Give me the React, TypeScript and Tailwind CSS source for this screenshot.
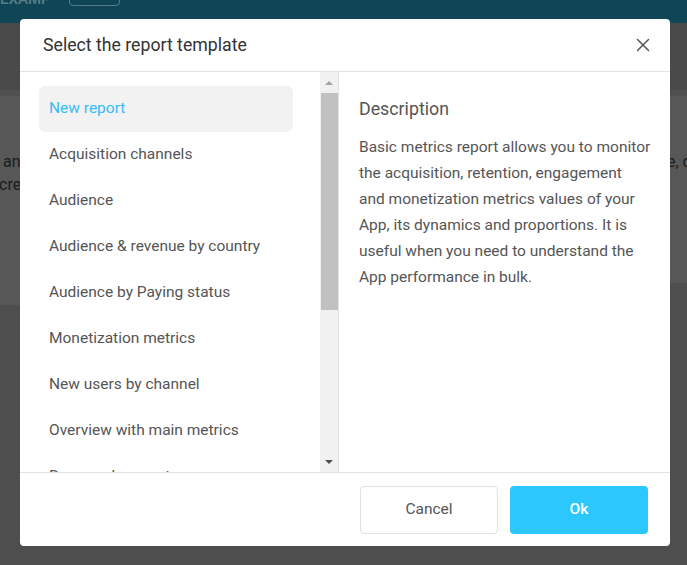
import { X } from 'lucide-react'

const templates = [
  'New report',
  'Acquisition channels',
  'Audience',
  'Audience & revenue by country',
  'Audience by Paying status',
  'Monetization metrics',
  'New users by channel',
  'Overview with main metrics',
  'Revenue by country',
]

const descLines = [
  'Basic metrics report allows you to monitor',
  'the acquisition, retention, engagement',
  'and monetization metrics values of your',
  'App, its dynamics and proportions. It is',
  'useful when you need to understand the',
  'App performance in bulk.',
]

export default function App() {
  return (
    <div className="relative h-[565px] w-[687px] overflow-hidden bg-[#4e4e4e] font-['Roboto',sans-serif]">
      {/* dimmed page behind the dialog */}
      <div className="flex h-[23px] items-start bg-[#0f4657]">
        <span className="-mt-[8px] w-[69px] text-[15px] leading-none font-medium text-[#5d7d88]">EXAMP</span>
        <div className="-mt-[10px] h-[16px] w-[51px] rounded border border-[#5b7c87]" />
      </div>
      <div className="h-[67px] bg-[#4a4a4a]" />
      <div className="h-[6px] bg-[#505050]" />
      <div className="flex text-[16px] leading-[23px] text-[#1c1c1c]">
        <div className="h-[209px] flex-1 bg-[#575757] pt-[54px]">
          <div className="-ml-[1px]">&nbsp;an</div>
          <div className="-ml-[1px]">crea</div>
        </div>
        <div className="h-[187px] w-[20px] bg-[#575757] pt-[54px] text-right">
          <div className="-mr-[4px] whitespace-nowrap">e, c</div>
        </div>
      </div>

      {/* dialog */}
      <div className="absolute top-[19px] left-[20px] flex h-[527px] w-[650px] flex-col rounded bg-white">
        <div className="flex h-[53px] shrink-0 items-center justify-between border-b border-[#e4e4e4] pr-[16px] pl-[23px]">
          <span className="text-[17.7px] text-[#333]">Select the report template</span>
          <X className="h-[22px] w-[22px] text-[#555]" strokeWidth={1.6} />
        </div>

        <div className="flex h-[401px] shrink-0 border-b border-[#e4e4e4]">
          <div className="w-[300px] overflow-hidden pt-[14px] pr-[27px] pl-[19px]">
            {templates.map((t, i) => (
              <div
                key={t}
                className={
                  i === 0
                    ? 'flex h-[46px] items-center rounded-md bg-[#f2f2f2] px-[10px] text-[15.5px] text-[#33bdf6]'
                    : 'flex h-[46px] items-center px-[10px] text-[15.5px] text-[#555]'
                }
              >
                {t}
              </div>
            ))}
          </div>

          {/* scrollbar */}
          <div className="flex w-[18px] flex-col items-center bg-[#f1f1f1]">
            <div className="flex h-[21px] items-center justify-center">
              <div className="h-0 w-0 border-r-[4px] border-b-[4px] border-l-[4px] border-r-transparent border-b-[#a3a3a3] border-l-transparent" />
            </div>
            <div className="h-[217px] w-[17px] bg-[#c1c1c1]" />
            <div className="flex-1" />
            <div className="flex h-[21px] items-center justify-center">
              <div className="h-0 w-0 border-t-[4px] border-r-[4px] border-l-[4px] border-t-[#505050] border-r-transparent border-l-transparent" />
            </div>
          </div>

          <div className="flex-1 border-l border-[#e4e4e4] pt-[24px] pr-[10px] pl-[20px] text-[#555]">
            <div className="text-[17.8px] leading-[26px]">Description</div>
            <div className="mt-[12px] text-[15.5px] leading-[26px]">
              {descLines.map((l) => (
                <div key={l} className="whitespace-nowrap">
                  {l}
                </div>
              ))}
            </div>
          </div>
        </div>

        <div className="flex flex-1 items-center justify-end gap-[12px] pr-[22px]">
          <button className="h-[48px] w-[138px] rounded border border-[#e0e0e6] bg-white text-[15.5px] text-[#555]">
            Cancel
          </button>
          <button className="h-[48px] w-[138px] rounded bg-[#2cc8fd] text-[15.5px] font-medium text-white">Ok</button>
        </div>
      </div>
    </div>
  )
}
